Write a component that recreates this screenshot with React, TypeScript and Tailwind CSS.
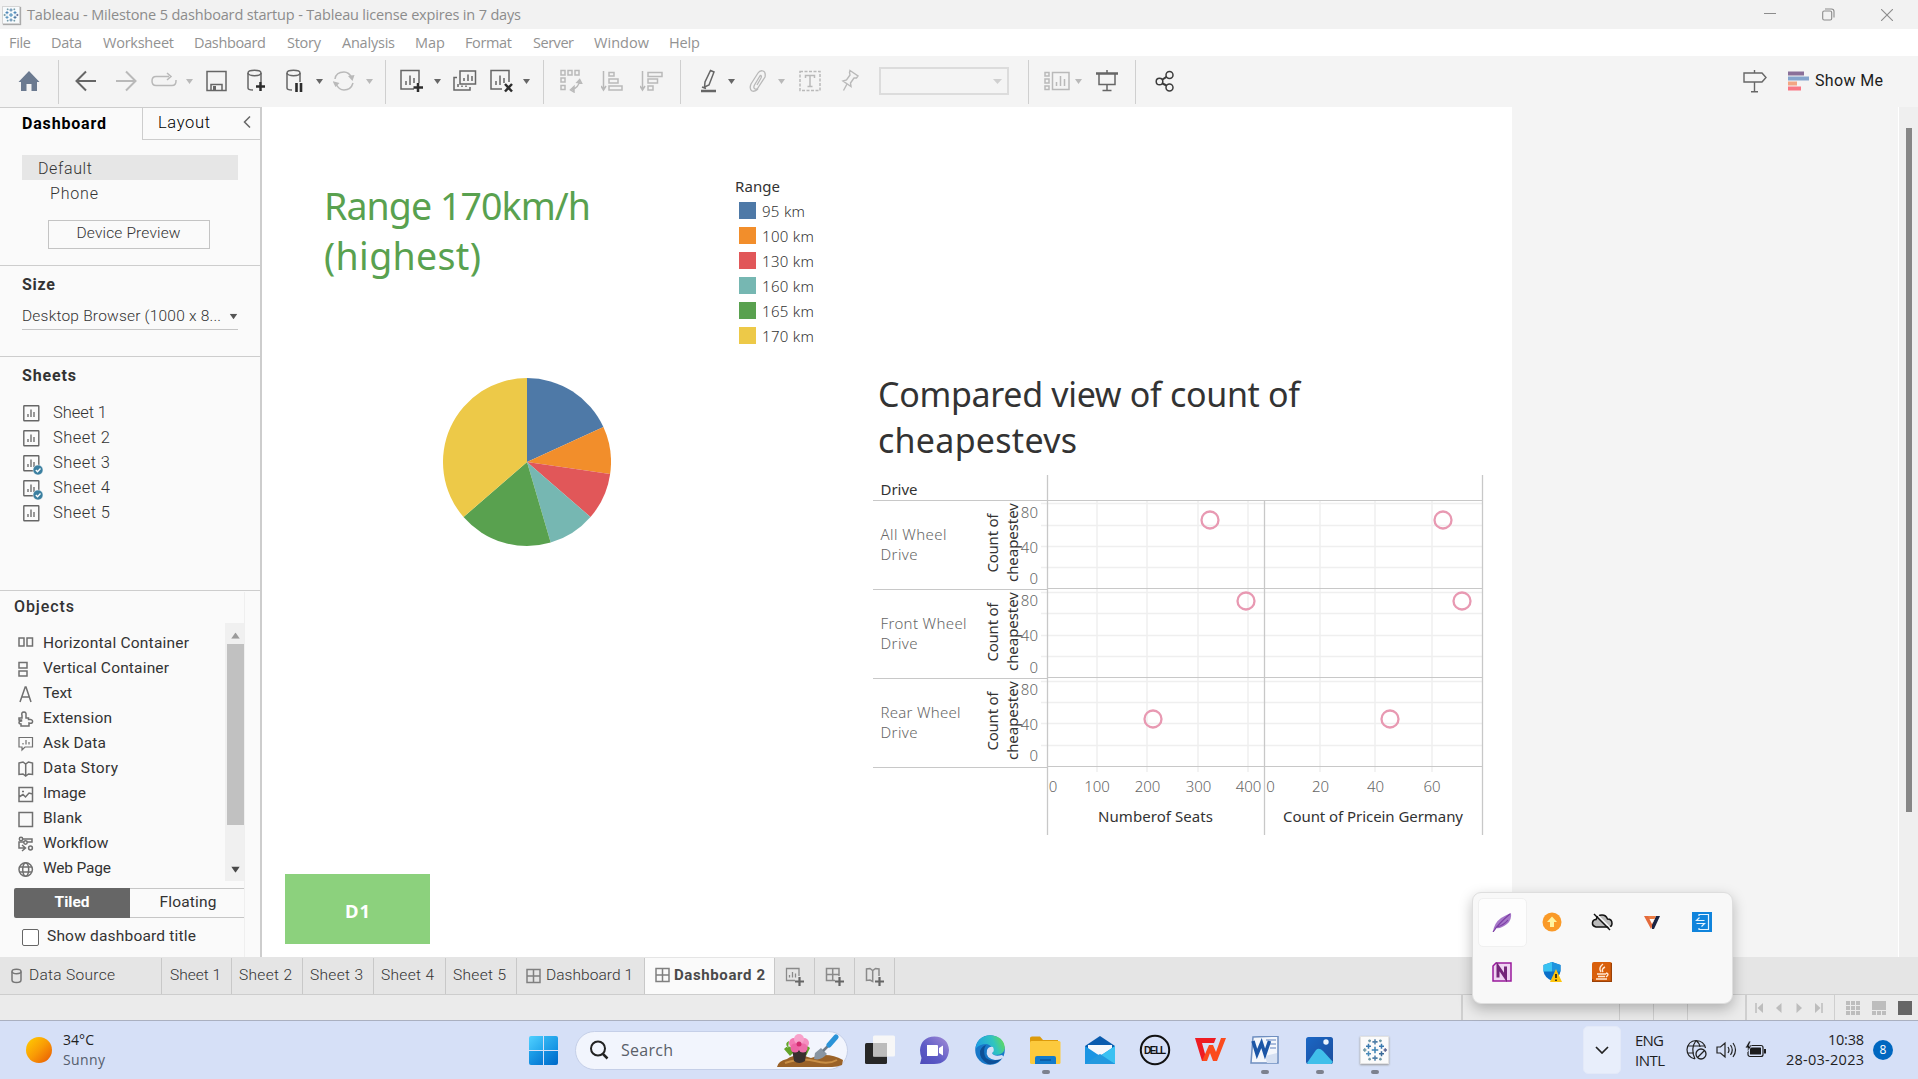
import { useLayoutEffect, useRef, type ReactNode } from "react";

/** Text spaced out or tightened so that it fills a given width. */
function Label({ w, children, className = "" }: { w: number; children: string; className?: string }) {
  const ref = useRef<HTMLSpanElement>(null);
  useLayoutEffect(() => {
    const el = ref.current;
    if (!el) return;
    el.style.letterSpacing = "0px";
    const range = document.createRange();
    range.selectNodeContents(el);
    const natural = range.getBoundingClientRect().width;
    el.style.letterSpacing = `${(w - natural) / Math.max(1, children.length - 1)}px`;
  }, [w, children]);
  return (
    <span ref={ref} style={{ width: w }} className={`inline-block shrink-0 whitespace-nowrap ${className}`}>
      {children}
    </span>
  );
}

function Icon({ w, h, className = "", children }: { w: number; h: number; className?: string; children: ReactNode }) {
  return (
    <svg
      width={w}
      height={h}
      viewBox={`0 0 ${w} ${h}`}
      fill="none"
      stroke="currentColor"
      strokeWidth={1.5}
      className={`block shrink-0 ${className}`}
    >
      {children}
    </svg>
  );
}

const SEGOE = "font-['Open_Sans',sans-serif]";
const BENTON = "font-['Roboto',sans-serif]";

function TableauMark({ size, className = "" }: { size: number; className?: string }) {
  const marks: [number, number, number, string][] = [
    [12, 12, 3, "#3d83b5"], [12, 4.5, 2.4, "#4f7fa8"], [12, 19.5, 2.4, "#4f7fa8"],
    [6, 8.5, 2.3, "#3a7ab0"], [18, 8.5, 2.3, "#3a7ab0"], [6, 15.5, 2.3, "#4a8ab8"], [18, 15.5, 2.3, "#3a6a98"],
    [2.5, 12, 1.6, "#7099a6"], [21.5, 12, 1.6, "#5b6591"], [7, 3.5, 1.3, "#7099a6"], [17, 3.5, 1.3, "#7099a6"],
    [7, 20.5, 1.3, "#7099a6"], [17, 20.5, 1.3, "#7099a6"],
  ];
  return (
    <svg width={size} height={size} viewBox="0 0 24 24" className={`block shrink-0 ${className}`}>
      {marks.map(([x, y, r, c], i) => (
        <path key={i} d={`M${x - r} ${y}H${x + r}M${x} ${y - r}V${y + r}`} stroke={c} strokeWidth={1.4} />
      ))}
    </svg>
  );
}

function TitleBar() {
  return (
    <div className="flex h-[29px] items-center bg-[#f2f2f2] pl-[2px] text-[#8c8c8c]">
      <div className="flex size-[18px] items-center justify-center border border-[#d5d5d5] bg-[#f7fafc] shadow-[1px_1px_1px_#aaa]">
        <TableauMark size={16} />
      </div>
      <Label w={494} className={`ml-[7px] text-[14.5px] ${SEGOE}`}>
        Tableau - Milestone 5 dashboard startup - Tableau license expires in 7 days
      </Label>
      <Icon w={12} h={12} className="ml-[1243px]"><path d="M0 4.5H12" strokeWidth={1} /></Icon>
      <Icon w={13} h={13} className="ml-[46px]">
        <rect x={0.7} y={3} width={9} height={9} rx={1.5} strokeWidth={1.1} />
        <path d="M3 1H9.5Q12 1 12 3.5V9.5" strokeWidth={1.1} />
      </Icon>
      <Icon w={12} h={12} className="ml-[46px]"><path d="M0 0L12 12M12 0L0 12" strokeWidth={1.1} /></Icon>
    </div>
  );
}

const MENUS: [string, number, string][] = [
  ["File", 22, "ml-[9px]"], ["Data", 31, "ml-[20px]"], ["Worksheet", 71, "ml-[21px]"],
  ["Dashboard", 72, "ml-[20px]"], ["Story", 34, "ml-[21px]"], ["Analysis", 53, "ml-[21px]"],
  ["Map", 30, "ml-[20px]"], ["Format", 47, "ml-[20px]"], ["Server", 41, "ml-[21px]"],
  ["Window", 55, "ml-[20px]"], ["Help", 31, "ml-[20px]"],
];

function MenuBar() {
  return (
    <div className={`flex h-[27px] items-center bg-white text-[14.5px] text-[#929292] ${SEGOE}`}>
      {MENUS.map(([name, w, ml]) => (
        <Label key={name} w={w} className={ml}>{name}</Label>
      ))}
    </div>
  );
}

const Sep = ({ className }: { className: string }) => <div className={`mt-px h-[44px] w-px shrink-0 bg-[#cfcfcf] ${className}`} />;

function Caret({ className = "" }: { className?: string }) {
  return (
    <svg width={7} height={5} viewBox="0 0 7 5" fill="currentColor" className={`block shrink-0 ${className}`}>
      <path d="M0 0H7L3.5 5Z" />
    </svg>
  );
}

const DIM = "text-[#b9b9b9]";

function Toolbar() {
  return (
    <div className="flex h-[51px] items-center bg-[#f4f4f4] pb-px text-[#666]">
      <Icon w={22} h={22} className="ml-[18px]">
        <path d="M11 1L21.5 12H19V21H13.5V14H8.5V21H3V12H0.5Z" fill="#6b7a90" stroke="none" />
      </Icon>
      <Sep className="ml-[18px]" />
      <Icon w={22} h={22} className="ml-[16px]"><path d="M21 11H1.5M11 1.5L1.5 11L11 20.500" strokeWidth={2} /></Icon>
      <Icon w={22} h={22} className={`ml-[18px] ${DIM}`}><path d="M1 11H20.500M11 1.500L20.500 11L11 20.500" strokeWidth={2} /></Icon>
      <Icon w={26} h={18} className={`ml-[14px] ${DIM}`}>
        <path d="M18 4.500H5Q1 4.500 1 9T5 13.500H21Q25 13.500 25 9V8M16 1L20 4.500L16 8" />
      </Icon>
      <Caret className={`ml-[9px] ${DIM}`} />
      <Icon w={21} h={22} className="ml-[13px]">
        <path d="M1 1.500H20V20.500H1ZM5 20V14.500H16V20" /><rect x={7} y={16} width={3} height={4} fill="currentColor" stroke="none" />
      </Icon>
      <Icon w={20} h={24} className="ml-[20px]">
        <path d="M1 4V19Q1 21 6 21M14 4V13" /><ellipse cx={7.500} cy={4} rx={6.500} ry={2.700} />
        <path d="M13.500 13V22M9 17.500H18" stroke="#2c2c2c" strokeWidth={2.500} />
      </Icon>
      <Icon w={20} h={24} className="ml-[19px]">
        <path d="M1 4V19Q1 21 6 21M14 4V13" /><ellipse cx={7.500} cy={4} rx={6.500} ry={2.700} />
        <path d="M10.500 14V23M15 14V23" stroke="#2c2c2c" strokeWidth={2.600} />
      </Icon>
      <Caret className="ml-[10px]" />
      <Icon w={22} h={22} className={`ml-[10px] ${DIM}`}>
        <path d="M2 9Q3 2 11 2Q16 2 19 8M20 13Q18 20 11 20Q6 20 3 14" />
        <path d="M15.500 6L22 5L20 11ZM0 11L3 17L7 13Z" fill="currentColor" stroke="none" transform="translate(-0.500 0)" />
      </Icon>
      <Caret className={`ml-[11px] ${DIM}`} />
      <Sep className="ml-[12px]" />
      <Icon w={24} h={24} className="ml-[14px]">
        <path d="M14 20H1V1.500H19V14M6 16V12M10 16V6.500M14 14V9" />
        <path d="M18 14V23M13.500 18.500H23" stroke="#2c2c2c" strokeWidth={2.500} />
      </Icon>
      <Caret className="ml-[10px]" />
      <Icon w={24} h={24} className="ml-[12px]">
        <path d="M7 2H22.500V15H7ZM4 8.500H1V21H17V18M11 12V9M15 12V5.500M19 12V7M5 18V15M9 18V16.500M13 18V16.500" />
      </Icon>
      <Icon w={24} h={24} className="ml-[13px]">
        <path d="M12 20H1V1.500H19V13M6 16V12M10 16V6.500M14 14V9" />
        <path d="M15 15L22 22.500M22 15L15 22.500" stroke="#2c2c2c" strokeWidth={2.500} />
      </Icon>
      <Caret className="ml-[9px]" />
      <Sep className="ml-[13px]" />
      <Icon w={23} h={24} className={`ml-[16px] ${DIM}`}>
        <path d="M1 1.500H5V6H1ZM8 1.500H12V6H8ZM15 1.500H19V6H15ZM1 9H5V13H1ZM1 16.500H5V20.500H1Z" />
        <path d="M19.500 12Q18.500 19 12 20.500M17 13.500L19.700 10.500L21.500 14ZM14 17.500L10.500 20.800L14 23Z" />
      </Icon>
      <Icon w={22} h={22} className={`ml-[18px] ${DIM}`}>
        <path d="M2.500 1V19M0 16L2.500 20L5 16M8 2.500H13V6H8ZM8 9H17V13H8ZM8 16H21V20H8Z" />
      </Icon>
      <Icon w={23} h={22} className={`ml-[17px] ${DIM}`}>
        <path d="M2.500 1V19M0 16L2.500 20L5 16M8 2.500H22V6.500H8ZM8 9H17.500V13H8ZM8 16H13V20H8Z" />
      </Icon>
      <Sep className="ml-[17px]" />
      <Icon w={16} h={24} className="ml-[20px]">
        <path d="M9.500 1.500L13 3L8 16L3.500 18L4 13ZM1 18L5 19.500" /><path d="M0 22H15" strokeWidth={2.500} />
      </Icon>
      <Caret className="ml-[11px]" />
      <Icon w={18} h={24} className={`ml-[14px] ${DIM}`}>
        <path d="M11.500 6L5.500 16Q4 19 6 20Q8 21 9.500 18L16 8Q17 3 14 2Q11 1 9 4L2 15Q0 20 3 22Q6 23 9 20M11.500 6Q13 7 12 9L8 16" strokeWidth={1.300} />
      </Icon>
      <Caret className={`ml-[11px] ${DIM}`} />
      <Icon w={22} h={22} className={`ml-[14px] ${DIM}`}>
        <rect x={1} y={1.500} width={20} height={19} strokeDasharray="3 1.500" /><path d="M6.500 8V5.500H15.500V8M11 5.500V16.500M8.500 16.500H13.500" />
      </Icon>
      <Icon w={18} h={24} className={`ml-[20px] ${DIM}`}>
        <g strokeWidth={1.400}><path d="M9 1.500L17 7L15.500 9L13 9L9.500 14L10 17.500L2 12L5.500 11L9 6L8.500 3.500Z" /><path d="M6 15L2.500 21.500" /></g>
      </Icon>
      <div className="ml-[20px] flex h-[28px] w-[130px] shrink-0 items-center justify-end border-2 border-[#dcdcdc] pr-[5px] text-[#d0d0d0]">
        <svg width={9} height={5} viewBox="0 0 9 5" fill="currentColor"><path d="M0 0H9L4.500 5Z" /></svg>
      </div>
      <Sep className="ml-[19px]" />
      <Icon w={26} h={20} className={`ml-[15px] ${DIM}`}>
        <path d="M1 1.500H5V5H1ZM1 8H5V12H1ZM1 15H5V18.500H1ZM8.500 1.500H25V18.500H8.500ZM12.500 15V11M16.500 15V5M20.500 15V8" />
      </Icon>
      <Caret className={`ml-[5px] ${DIM}`} />
      <Icon w={22} h={22} className="ml-[14px]">
        <path d="M0 3.500H22" strokeWidth={2.500} /><path d="M3 4V14.500H19V4M11 0V3M11 15V20M6.500 20.500H15.500" />
      </Icon>
      <Sep className="ml-[17px]" />
      <Icon w={20} h={22} className="ml-[19px] text-[#3c3c3c]">
        <circle cx={4.500} cy={11.500} r={3.300} /><circle cx={14.500} cy={5} r={3.500} /><circle cx={14.500} cy={17.500} r={3.500} />
        <path d="M7.500 9.500L11.500 6.800M7.500 13.500L11.500 15.500" strokeWidth={2} />
      </Icon>
      <Icon w={24} h={24} className="ml-[568px]">
        <path d="M1 4H19L23 8.500L19 13H1ZM11.500 1V4M11.500 13V22.500M8 22.800H15" strokeWidth={1.400} />
      </Icon>
      <Icon w={21} h={20} className="ml-[21px]">
        <g stroke="none"><rect width={16} height={4} y={0.500} fill="#8a7099" /><rect width={21} height={4} y={5.500} fill="#85a5cd" /><rect width={9} height={4} y={10.500} fill="#f3a583" /><rect width={13} height={4} y={15.500} fill="#f97784" /></g>
      </Icon>
      <Label w={68} className={`ml-[6px] text-[16px] text-[#1c1c1c] ${BENTON}`}>Show Me</Label>
    </div>
  );
}

function SheetIcon({ used }: { used?: boolean }) {
  return (
    <Icon w={21} h={21} className="mt-[2px] text-[#666]">
      <rect x={0.800} y={1.800} width={15} height={15} rx={0.500} strokeWidth={1.400} />
      <path d="M5 13V10M8 13V5.500M11 13V8" strokeWidth={1.300} />
      {used && (
        <>
          <circle cx={15} cy={16} r={5} fill="#3a7fa0" stroke="#fafafa" strokeWidth={0.500} />
          <path d="M12.800 16L14.500 17.700L17.500 14.500" stroke="#fff" strokeWidth={1.300} />
        </>
      )}
    </Icon>
  );
}

const OBJECTS: [string, number, ReactNode][] = [
  ["Horizontal Container", 146, <path d="M1 3H6V11H1ZM9 3H14.500V11H9Z" />],
  ["Vertical Container", 126, <path d="M1 2.500H9V8H1ZM1 11H9V16H1Z" />],
  ["Text", 29, <path d="M2 17L7.200 2H8L13 17M4 12H11" />],
  ["Extension", 69, <path d="M1 8H4V5.500Q3 2 6 2Q8.500 2 8 5.500V8H10.500V9.500H12.500Q15 10 14.500 12T11 13V16H3V14Q1 14 1 12.500T3.500 11V10H1Z" />],
  ["Ask Data", 63, <path d="M1 2.500H14.500V12H7L4 15V12H1ZM5 9.500V8M8 9.500V5M11 9.500V7" strokeWidth={1.200} />],
  ["Data Story", 75, <path d="M1 3L5 2L7.700 4L10.500 2L14.500 3V14.500L10.500 14L7.700 16L5 14L1 14.500ZM7.700 4V16" />],
  ["Image", 43, <path d="M1 2.500H14.500V16.500H1ZM1 12L5 9.500L7.500 12L11 8L14.500 9M4 6.500H6" />],
  ["Blank", 39, <path d="M1 2.500H14.500V16.500H1Z" />],
  ["Workflow", 65, <><path d="M5 4H14V7H1V13H7M4 10L7.500 13L4 16" /><circle cx={3} cy={4} r={1.700} /><circle cx={7.500} cy={7.500} r={1.700} fill="#fafafa" /><circle cx={12.500} cy={13} r={1.900} /></>],
  ["Web Page", 68, <><circle cx={7.700} cy={9.500} r={6.700} /><ellipse cx={7.700} cy={9.500} rx={3} ry={6.700} /><path d="M1.500 7H14M1.500 12H14" /></>],
];

function Sidebar() {
  return (
    <aside className={`flex w-[262px] shrink-0 flex-col border-t border-r-2 border-[#cdcdcd] bg-[#fafafa] text-[#333] ${BENTON}`}>
      <div className="flex h-[32px] shrink-0">
        <div className="flex w-[142px] items-center pl-[22px] pb-px">
          <Label w={84} className="text-[16px] font-bold text-black">Dashboard</Label>
        </div>
        <div className="flex flex-1 items-center border-b border-l border-[#cdcdcd] pl-[15px] text-black">
          <Label w={52} className="text-[16.5px] font-light">Layout</Label>
          <Icon w={8} h={12} className="mb-[3px] ml-[33px] text-[#666]"><path d="M7 0.500L1.500 6L7 11.500" /></Icon>
        </div>
      </div>
      <div className="h-[126px] shrink-0 border-b border-[#cdcdcd] px-[22px] pt-[15px] text-[16px] font-light">
        <div className="flex h-[25px] w-[216px] items-center bg-[#e6e6e6] pl-[16px] pt-[3px]"><Label w={54}>Default</Label></div>
        <div className="flex h-[25px] items-center pl-[28px] pt-[3px]"><Label w={48}>Phone</Label></div>
        <div className="mt-[15px] ml-[26px] flex h-[29px] w-[162px] items-center justify-center border border-[#c4c4c4] bg-[#fafafa] pr-px pb-px text-[15.5px]">
          <Label w={104}>Device Preview</Label>
        </div>
      </div>
      <div className="h-[91px] shrink-0 border-b border-[#cdcdcd] px-[22px] pt-[8px]">
        <div className="flex h-[22px] items-center"><Label w={33} className="text-[16px] font-bold">Size</Label></div>
        <div className="mt-[8px] flex h-[26px] w-[216px] items-center justify-between border-b border-[#c6c6c6] text-[15.5px] font-light">
          <Label w={199}>Desktop Browser (1000 x 8...</Label>
          <Caret className="mr-px scale-110 text-[#555]" />
        </div>
      </div>
      <div className="h-[234px] shrink-0 border-b border-[#cdcdcd] px-[22px] pt-[8px]">
        <div className="flex h-[22px] items-center"><Label w={54} className="text-[16px] font-bold">Sheets</Label></div>
        <div className="mt-[14px] text-[16.5px] font-light">
          {[1, 2, 3, 4, 5].map((n) => (
            <div key={n} className="flex h-[25px] items-center pl-px">
              <SheetIcon used={n === 3 || n === 4} />
              <Label w={n === 1 ? 54 : 57} className="ml-[9px]">{`Sheet ${n}`}</Label>
            </div>
          ))}
        </div>
      </div>
      <div className="mt-px mr-[15px] flex flex-1 flex-col border-r border-[#efefef]">
        <div className="flex h-[31px] items-center pl-[14px] pb-[2px]"><Label w={60} className="text-[16px] font-medium">Objects</Label></div>
        <div className="flex h-[258px] shrink-0 justify-between">
          <div className="pt-[8px] pl-[18px] text-[15.500px]">
            {OBJECTS.map(([name, w, art]) => (
              <div key={name} className="flex h-[25px] items-center">
                <Icon w={17} h={18} className="text-[#707070]">{art}</Icon>
                <Label w={w} className="ml-[8px]">{name}</Label>
              </div>
            ))}
          </div>
          <div className="flex w-[19px] shrink-0 flex-col items-end bg-[#f0f0f0]">
            <div className="flex h-[21px] w-[17px] items-center justify-center pt-[3px] text-[#9b9b9b]"><Caret className="rotate-180 scale-125" /></div>
            <div className="h-[181px] w-[17px] bg-[#c1c1c1]" />
            <div className="mt-[33px] flex h-[23px] w-[17px] items-center justify-center text-[#4a4a4a]"><Caret className="scale-125" /></div>
          </div>
        </div>
        <div className="mt-[7px] ml-[14px] flex h-[30px] text-[15.500px]">
          <div className="flex w-[116px] items-center justify-center rounded-l-[2px] bg-[#666] pb-px font-bold text-white"><Label w={35}>Tiled</Label></div>
          <div className="flex flex-1 items-center justify-center border-y border-[#c6c6c6] pb-px pl-[2px]"><Label w={57}>Floating</Label></div>
        </div>
        <div className="mt-[8px] flex h-[22px] items-center pl-[22px] text-[15.500px]">
          <div className="size-[17px] rounded-[2px] border border-[#666] bg-white" />
          <Label w={149} className="ml-[8px]">Show dashboard title</Label>
        </div>
      </div>
    </aside>
  );
}

const RANGES: [string, string, number][] = [
  ["95 km", "#4e79a7", 2], ["100 km", "#f28e2b", 1], ["130 km", "#e15759", 1],
  ["160 km", "#76b7b2", 1], ["165 km", "#59a14f", 2], ["170 km", "#edc948", 4],
];

function Pie() {
  let start = 0;
  const at = (t: number) => `${84 + 84 * Math.sin((t / 11) * 2 * Math.PI)} ${84 - 84 * Math.cos((t / 11) * 2 * Math.PI)}`;
  return (
    <svg width={168} height={168} viewBox="0 0 168 168" className="block">
      {RANGES.map(([name, color, n]) => {
        const d = `M84 84L${at(start)}A84 84 0 0 1 ${at(start + n)}Z`;
        start += n;
        return <path key={name} d={d} fill={color} />;
      })}
    </svg>
  );
}

const ROWS: { name: string; top: number; base: number; grid: number[]; ticks: number[]; points: [number, number][] }[] = [
  { name: "All Wheel", top: 26, base: 114, grid: [28.5, 50.5, 71.5, 92.5], ticks: [38.5, 73.5, 104.5], points: [[337, 46], [570, 46]] },
  { name: "Front Wheel", top: 115, base: 203, grid: [117.5, 138.5, 160.5, 181.5], ticks: [126.5, 161.5, 193.5], points: [[373, 127], [589, 127]] },
  { name: "Rear Wheel", top: 204, base: 292, grid: [206.5, 227.5, 248.5, 270.5], ticks: [215.5, 250.5, 281.5], points: [[280, 245], [517, 245]] },
];
const XTICKS: [string, number, boolean][] = [
  ["0", 180, false], ["100", 224, true], ["200", 274.5, true], ["300", 325.5, true], ["400", 375.5, true],
  ["0", 397.5, false], ["20", 447.5, true], ["40", 502.5, true], ["60", 559, true],
];

/** Scatter matrix of vehicle counts, split by drive type. */
function Scatter() {
  return (
    <svg width={612} height={362} viewBox="0 0 612 362" className="block font-['Noto_Sans',sans-serif] text-[15px]" fill="#666">
      {XTICKS.filter((t) => t[2]).map(([t, x]) => (
        <path key={x} d={`M${Math.floor(x)} 26V297`} stroke="#efefef" strokeWidth={1.500} data-tick={t} />
      ))}
      {ROWS.map((r) => (
        <g key={r.name}>
          {r.grid.map((y) => <path key={y} d={`M168 ${y}H609`} stroke="#efefef" strokeWidth={1.500} />)}
          <g className="font-light">
            <text x={7.500} y={r.top + 38.5} textLength={r.name === "All Wheel" ? 66 : r.name === "Front Wheel" ? 86 : 80}>{r.name}</text>
            <text x={7.500} y={r.top + 58.5} textLength={37}>Drive</text>
          </g>
          <g fill="#333">
            <text transform={`translate(124.500 ${r.top + 71.500}) rotate(-90)`} textLength={59}>Count of</text>
            <text transform={`translate(145 ${r.top + 81}) rotate(-90)`} textLength={79}>cheapestev</text>
          </g>
          {["80", "40", "0"].map((t, i) => (
            <text key={t} x={165} y={r.ticks[i] + 4.5} textAnchor="end" className="font-light">{t}</text>
          ))}
        </g>
      ))}
      <path d="M0 25.500H609.500V291.500M174.500 113.500H609M0 114.500H174M174.500 202.500H609M0 203.500H174M174.500 291.500H609M0 292.500H175" stroke="#c8c8c8" fill="none" />
      <path d="M174.500 0V360M391.500 26V360M609.500 0V360" stroke="#c8c8c8" strokeWidth={1.300} fill="none" />
      <text x={7.500} y={19.500} textLength={37} fill="#333">Drive</text>
      {ROWS.flatMap((r) => r.points).map(([x, y]) => (
        <circle key={x} cx={x} cy={y - 1} r={8.500} fill="none" stroke="#e899b2" strokeWidth={2.300} />
      ))}
      {XTICKS.map(([t, x], i) => <text key={i} x={x} y={316.500} textAnchor="middle" className="font-light">{t}</text>)}
      <g fill="#333">
        <text x={225} y={346.500} textLength={115}>Numberof Seats</text>
        <text x={410} y={346.500} textLength={180}>Count of Pricein Germany</text>
      </g>
    </svg>
  );
}

function Canvas() {
  return (
    <main className="flex w-[1250px] shrink-0 bg-white font-['Noto_Sans',sans-serif]">
      <section className="flex w-[473px] shrink-0 flex-col">
        <h1 className="ml-[62px] mt-[74px] flex flex-col text-[37.5px] leading-[50px] text-[#59a14f]">
          <Label w={267}>Range 170km/h</Label>
          <Label w={157}>(highest)</Label>
        </h1>
        <div className="mt-[97px] ml-[181px]"><Pie /></div>
        <div className="mt-[328px] ml-[23px] flex h-[70px] w-[145px] items-center justify-center bg-[#8cd17d] pt-[3px] text-[18.5px] font-bold text-white">
          <Label w={25}>D1</Label>
        </div>
      </section>
      <section className="flex flex-col">
        <div className="pt-[68px] text-[15px] text-[#333]">
          <div className="flex h-[23px] items-center"><Label w={45}>Range</Label></div>
          {RANGES.map(([name, color]) => (
            <div key={name} className="flex h-[25px] items-center font-light">
              <svg width={17} height={17} className="ml-[4px]"><rect width={17} height={17} fill={color} /></svg>
              <Label w={name === "95 km" ? 43 : 52} className="ml-[6px] mt-px">{name}</Label>
            </div>
          ))}
        </div>
        <div className="ml-[138px] mt-[23px]">
          <h2 className="ml-[5px] flex flex-col text-[34px] leading-[46px] text-[#333]">
            <Label w={422}>Compared view of count of</Label>
            <Label w={199}>cheapestevs</Label>
          </h2>
          <div className="mt-[12px]"><Scatter /></div>
        </div>
      </section>
    </main>
  );
}

const GridIcon = ({ className = "" }: { className?: string }) => (
  <Icon w={15} h={16} className={`text-[#808080] ${className}`}><path d="M1 1.500H14V14.500H1ZM7.500 1.500V14.500M1 8H14" /></Icon>
);

function TabStrip() {
  return (
    <div className={`flex h-[38px] shrink-0 items-stretch border-b border-[#cdcdcd] bg-[#e5e5e5] pt-px text-[15.5px] font-light text-[#333] ${BENTON}`}>
      <div className="flex w-[162px] items-center border-r border-[#c8c8c8] pl-[11px]">
        <Icon w={11} h={16} className="text-[#777]"><ellipse cx={5.500} cy={3.500} rx={4.500} ry={2.200} /><path d="M1 3.500V12Q1 14.500 5.500 14.500T10 12V3.500" /></Icon>
        <Label w={86} className="ml-[7px]">Data Source</Label>
      </div>
      <div className="flex w-[70px] items-center border-r border-[#c8c8c8] pl-[8px]"><Label w={51}>Sheet 1</Label></div>
      <div className="flex w-[71px] items-center border-r border-[#c8c8c8] pl-[7px]"><Label w={53}>Sheet 2</Label></div>
      <div className="flex w-[71px] items-center border-r border-[#c8c8c8] pl-[7px]"><Label w={53}>Sheet 3</Label></div>
      <div className="flex w-[72px] items-center border-r border-[#c8c8c8] pl-[7px]"><Label w={53}>Sheet 4</Label></div>
      <div className="flex w-[71px] items-center border-r border-[#c8c8c8] pl-[7px]"><Label w={53}>Sheet 5</Label></div>
      <div className="flex w-[127px] items-center pl-[9px]"><GridIcon /><Label w={87} className="ml-[5px]">Dashboard 1</Label></div>
      <div className="flex w-[131px] items-center border-x border-[#c8c8c8] bg-[#fafafa] pl-[10px] pb-[2px] font-bold text-[#4a4a4a]">
        <GridIcon /><Label w={91} className="ml-[4px] text-[15px]">Dashboard 2</Label>
      </div>
      {[
        <path d="M10 13.500H1.500V1.500H14V9M4.500 10.500V8M7.500 10.500V5M10.500 10.500V6.500" strokeWidth={1.300} />,
        <path d="M10 13.500H1.500V1.500H14V9M7.700 1.500V13.500M1.500 7.500H14" />,
        <path d="M7.700 3.500V14.500L5 13L1.500 13.500V2L5 1.500L7.700 3.500L10.500 1.500L14 2V9" />,
      ].map((art, i) => (
        <div key={i} className="flex w-[40px] items-center border-r border-[#c8c8c8] pl-[10px] pt-[2px]">
          <Icon w={21} h={20} className="text-[#8a8a8a]">{art}<path d="M14.500 10V19M10 14.500H19" stroke="#666" strokeWidth={2.200} /></Icon>
        </div>
      ))}
    </div>
  );
}

function StatusBar() {
  return (
    <div className="flex h-[26px] shrink-0 justify-end border-b border-[#aab0c0] bg-[#ebebeb] text-[#bdbdbd]">
      <div className="w-[158px] border-l-2 border-[#cfcfcf]" />
      <div className="w-[34px] border-l border-[#cfcfcf]" />
      <div className="w-[34px] border-l border-[#cfcfcf]" />
      <div className="w-[58px] border-l border-[#cfcfcf]" />
      <div className="flex w-[89px] items-center border-l-2 border-[#cfcfcf] pl-[8px]">
        <Icon w={8} h={10}><path d="M1 0V10" /><path d="M8 0V10L2.500 5Z" fill="currentColor" stroke="none" /></Icon>
        <Icon w={6} h={10} className="ml-[13px]"><path d="M5.500 0V10L0 5Z" fill="currentColor" stroke="none" /></Icon>
        <Icon w={6} h={10} className="ml-[14px]"><path d="M0.500 0V10L6 5Z" fill="currentColor" stroke="none" /></Icon>
        <Icon w={8} h={10} className="ml-[13px]"><path d="M7 0V10" /><path d="M0 0V10L5.500 5Z" fill="currentColor" stroke="none" /></Icon>
      </div>
      <div className="flex w-[84px] items-center border-l border-[#cfcfcf] pl-[11px]">
        <Icon w={14} h={14}><path d="M0 2H14M0 7H14M0 12H14" strokeWidth={4} strokeDasharray="4 1" /></Icon>
        <Icon w={14} h={14} className="ml-[12px]"><rect width={14} height={9} fill="currentColor" stroke="none" /><path d="M0 12H14" strokeWidth={4} strokeDasharray="4 1" /></Icon>
        <div className="ml-[12px] size-[14px] bg-[#666]" />
      </div>
    </div>
  );
}

function TrayPopup() {
  return (
    <div className="absolute top-[892px] left-[1472px] grid h-[112px] w-[261px] grid-cols-[50px_50px_50px_50px_50px] grid-rows-[50px_50px] rounded-[9px] border border-[#dedede] bg-[#f8f8f8] pt-[4px] pl-[4px] shadow-[0_5px_14px_rgba(0,0,0,0.25)] *:place-self-center">
      <div className="flex size-[49px] items-center justify-center rounded-[5px] border border-[#f0f0f0] bg-[#fdfdfd]">
        <Icon w={20} h={20}>
          <path d="M1 20Q2 11 9 6Q14 3 19 1Q20 8 15 12Q9 17 4 16Z" fill="#a678c8" stroke="none" /><path d="M1 20Q7 11 18 2M5 15Q12 13 16 8" stroke="#7d3fa6" strokeWidth={1.200} />
        </Icon>
      </div>
      <Icon w={20} h={20}><circle cx={10} cy={10} r={9.500} fill="#fa9a28" stroke="none" /><path d="M10 4.500L15 10H12V15H8V10H5Z" fill="#fff3a0" stroke="none" /></Icon>
      <Icon w={22} h={20}><path d="M5 15Q1 14 1.500 10.500Q2 7.500 5 7.500Q6.500 3 11 3Q15 3 16.500 7Q21 7 21 11.500Q21 15 17 15Z" fill="#bbb" stroke="#111" /><path d="M4.500 1L20.500 17" stroke="#f8f8f8" strokeWidth={1.500} /><path d="M3 2L19 18" stroke="#111" /></Icon>
      <Icon w={20} h={20}><path d="M2 4H8L11.500 12L9 17Z" fill="#e46b3c" stroke="none" /><path d="M18 4H14L10 13V17H12Z" fill="#1b2443" stroke="none" /><path d="M6 4H14L10 12Z" fill="#ed7d43" stroke="none" /><path d="M7.500 7H12.500L10 12Z" fill="#fff" stroke="none" /></Icon>
      <Icon w={20} h={20}><rect width={20} height={20} fill="#1084dc" stroke="none" /><path d="M7 4V2.500H16.500V17.500H7V16M12.500 8.500H4.500L7.500 5.500M4.500 11.500H12.500L9.500 14.500" stroke="#e6f4ff" strokeWidth={1.200} /></Icon>
      <Icon w={20} h={20}><path d="M4 1H19V19H1V4Z" fill="#efd4f2" stroke="#991a9c" /><path d="M6 15.500V4.500L13.500 15.500V4.500" stroke="#742579" strokeWidth={3} /></Icon>
      <Icon w={20} h={20}>
        <path d="M10 0L18.500 3V9Q18 15 10 19Q2 15 1.500 9V3Z" fill="#0a6fc9" stroke="none" /><path d="M10 0V9.500H1.500V3Z" fill="#38c3f2" stroke="none" /><path d="M10 0V9.500H18.500V3Z" fill="#1e94de" stroke="none" />
        <path d="M14 7L20 20H8Z" fill="#fdc40c" stroke="none" /><path d="M14 12V16M14 17.500V19" stroke="#111" />
      </Icon>
      <Icon w={20} h={20}><rect width={20} height={20} rx={2} fill="#d95f0b" stroke="none" /><path d="M0.500 17V19.500H19.500V1" stroke="#9c4106" /><path d="M11 2Q6 6 9 10M13 5Q9 7 11 10M5 12H14M6 14.500H13M14 11Q18 12 14 15M4 17H15" stroke="#ffe9d4" strokeWidth={1.400} /></Icon>
    </div>
  );
}

const Running = ({ children, className }: { children: ReactNode; className: string }) => (
  <div className={`relative shrink-0 ${className}`}>
    {children}
    <div className="absolute -bottom-[10px] left-1/2 h-[4px] w-[8px] -translate-x-1/2 rounded-full bg-[#7c818e]" />
  </div>
);

function Taskbar() {
  return (
    <div className={`flex h-[58px] shrink-0 items-center bg-[#d6e0f7] text-[14px] text-[#1f1f1f] ${SEGOE}`}>
      <div className="ml-[26px] size-[26px] shrink-0 rounded-full bg-linear-to-br from-[#ffd000] via-[#f99b05] to-[#e65304]" />
      <div className="ml-[11px] flex w-[44px] flex-col text-[14px] leading-[20px]">
        <Label w={31}>34°C</Label>
        <Label w={42} className="text-[#555d6c]">Sunny</Label>
      </div>
      <div className="ml-[422px] grid size-[29px] shrink-0 grid-cols-2 gap-px">
        <div className="rounded-tl-[2px] bg-linear-to-br from-[#4fd0ff] to-[#22a7ec]" />
        <div className="rounded-tr-[2px] bg-linear-to-br from-[#32b5f2] to-[#1090e2]" />
        <div className="rounded-bl-[2px] bg-linear-to-br from-[#20a4eb] to-[#0878d3]" />
        <div className="rounded-br-[2px] bg-linear-to-br from-[#1490e2] to-[#0069c8]" />
      </div>
      <div className="ml-[17px] flex h-[39px] w-[273px] shrink-0 items-center rounded-full border border-[#c5cfe8] bg-[#f2f5fd]">
        <Icon w={20} h={20} className="ml-[13px] text-[#222]"><circle cx={9} cy={8.500} r={7} strokeWidth={2} /><path d="M14 14L18.500 18.500" strokeWidth={2.500} /></Icon>
        <Label w={52} className="ml-[12px] text-[16px] text-[#5a5f69]">Search</Label>
        <Icon w={68} h={34} className="mt-[2px] ml-[104px]">
          <g stroke="none">
            <path d="M0 33Q1 27 10 25Q20 18 34 24Q50 17 66 26L65 31Q60 33 55 33Z" fill="#9a6228" />
            <path d="M8 29Q25 23 38 27T60 26" stroke="#c98f46" strokeWidth={2} fill="none" />
            <path d="M7 15Q13 9 17 18L13 22ZM33 14Q28 9 25 17L29 22ZM12 7Q7 9 11 14Z" fill="#63a329" />
            <path d="M15 15H30L28 27Q22 31 17 27Z" fill="#39302f" />
            <circle cx={17} cy={9} r={5} fill="#f47ab4" /><circle cx={27} cy={9} r={5} fill="#f590c0" /><circle cx={22} cy={5} r={5} fill="#f8a2cb" /><circle cx={18} cy={14} r={4.500} fill="#ee64a5" /><circle cx={26} cy={14} r={4.500} fill="#ee6eaa" /><circle cx={22} cy={10} r={2.500} fill="#d42c70" />
            <path d="M38 19L44 14L50 20Q44 27 37 25Z" fill="#8995a2" />
            <path d="M46 17L54 9" stroke="#6d7b89" strokeWidth={2.500} /><path d="M52 11L59 3" stroke="#2a93d8" strokeWidth={5} strokeLinecap="round" />
          </g>
        </Icon>
      </div>
      <Icon w={30} h={30} className="ml-[17px]"><g stroke="none"><rect y={8} width={22} height={21} rx={1.500} fill="#272727" /><rect x={8} y={0.500} width={22} height={21} rx={1.500} fill="#f7f7f7" /><path d="M8 8H22V21.500H8Z" fill="#bcbcbc" /></g></Icon>
      <Icon w={29} h={29} className="ml-[25px]">
        <defs><linearGradient id="chat" x1="1" x2="0" y2="1"><stop stopColor="#a48dd6" /><stop offset=".6" stopColor="#5c5ac6" /><stop offset="1" stopColor="#4e4bb9" /></linearGradient></defs>
        <path d="M0 28L1.500 22Q0 18 0 14Q1 1 14.500 0.500Q28 1 29 14Q28 28 14 28Z" fill="url(#chat)" stroke="none" /><path d="M7 9H17Q18 9 18 10V19Q18 20 17 20H7ZM19 12L23 9.500V19.500L19 17Z" fill="#fff" stroke="none" />
      </Icon>
      <Icon w={30} h={30} className="ml-[26px]">
        <defs><linearGradient id="edgeTop" y1=".5" x2="1" y2=".2"><stop stopColor="#1e9de4" /><stop offset=".6" stopColor="#30c4c0" /><stop offset="1" stopColor="#68dc4c" /></linearGradient></defs>
        <g stroke="none"><circle cx={15} cy={15} r={14.800} fill="#1878c9" /><path d="M0.500 14Q2 1 15 0.200Q29 1 29.800 13Q29 20 21 20Q16 20 18 16Q18 11 12 9Q4 9 0.500 14Z" fill="url(#edgeTop)" /><path d="M11 10Q7 16 11 23Q18 28 27 23Q22 30 13 29Q4 24 5 16Q7 11 11 10Z" fill="#0d4f97" /><path d="M18 12Q20 16 17 18Q19 22 27 20L29 22Q26 25 20 25Q10 23 12 15Q14 11 18 12Z" fill="#d6e0f7" /></g>
      </Icon>
      <Running className="ml-[25px]">
        <Icon w={31} h={28}><g stroke="none"><path d="M0 2Q0 0.500 2 0.500H10L13 4H28V10H0Z" fill="#dc9a0b" /><rect y={5} width={30.500} height={23} rx={1.500} fill="#fcca3d" /><path d="M5 28V22Q5 20 7 20H24Q26 20 26 22V28Z" fill="#127bcb" /><path d="M10 24H21" stroke="#0a569e" strokeWidth={1.500} /></g></Icon>
      </Running>
      <Icon w={30} h={28} className="ml-[24px]"><g stroke="none"><path d="M0 10L15 0L30 10V12H0Z" fill="#0a5bae" /><path d="M3 9H27V18H3Z" fill="#f6f8fc" /><path d="M0 10L15 20L30 10V28H0Z" fill="#1b95e3" /><path d="M15 20L30 10V28Z" fill="#3ac1f2" /><path d="M0 28L15 18L30 28Z" fill="#2399df" /></g></Icon>
      <svg width={32} height={32} viewBox="0 0 32 32" className="ml-[24px] block shrink-0"><circle cx={16} cy={16} r={14.200} fill="none" stroke="#111" strokeWidth={2} /><text x={16} y={19.500} fontSize={10} fontWeight={700} textAnchor="middle" textLength={22} fill="#111" className="font-['Liberation_Sans',sans-serif]">DELL</text></svg>
      <Icon w={31} h={24} className="ml-[24px]"><g stroke="none"><path d="M0 0H21L19 5H7L12 23H7Z" fill="#ee1c23" /><path d="M7 23L14 7H18L21 14L26 0H31L22 23H18L15 15L12 23Z" fill="#fb4b1d" /></g></Icon>
      <Running className="ml-[24px]">
        <Icon w={29} h={28}><g stroke="none"><path d="M3 1L28 0V27H1Z" fill="#f4f7fc" stroke="#6f8fc0" /><path d="M16 4H26M18 8H26M20 12H26" stroke="#8fa8d2" /><path d="M15 20L27 17V27H17Z" fill="#d5e0f2" /></g><path d="M3 5L7 18L11.500 7L15 18L19.500 5" stroke="#1c56a6" strokeWidth={3.500} /></Icon>
      </Running>
      <Running className="ml-[27px]">
        <Icon w={27} h={27}><defs><linearGradient id="photo" x2="1" y2="1"><stop stopColor="#1b67c5" /><stop offset="1" stopColor="#1b4d9d" /></linearGradient></defs><g stroke="none"><rect width={27} height={27} rx={2.500} fill="url(#photo)" /><path d="M1 26L10 13Q13 10 17 14L27 25L25 27H2Z" fill="#40bfea" /><circle cx={20} cy={5} r={2.700} fill="#ebf4ff" /></g></Icon>
      </Running>
      <Running className="ml-[27px]">
        <div className="flex h-[28px] w-[29px] items-center justify-center border border-[#e2e2e2] bg-[#fbfbfb] shadow-[0_1px_2px_#999]"><TableauMark size={26} /></div>
      </Running>
      <div className="ml-[194px] flex h-[48px] w-[38px] shrink-0 items-center justify-center rounded-[5px] border border-[#e3e9f8] bg-[#e8eefb]">
        <Icon w={14} h={8} className="text-[#222]"><path d="M1 1L7 7L13 1" strokeWidth={1.700} /></Icon>
      </div>
      <div className="ml-[14px] flex w-[31px] shrink-0 flex-col text-[15px] leading-[20px]"><Label w={29}>ENG</Label><Label w={30}>INTL</Label></div>
      <Icon w={22} h={22} className="ml-[20px] text-[#222]">
        <path d="M9 20Q1 18 1 10.500Q2 2 10 1.500Q18 2 19.500 9M10 1.500Q4 10 9 20M10 1.500Q13.500 4 14 8M2 7H18M2 14H8" strokeWidth={1.200} /><circle cx={15} cy={15} r={5} fill="#d6e0f7" strokeWidth={1.300} /><path d="M11.500 18.500L18.500 11.500" strokeWidth={1.300} />
      </Icon>
      <Icon w={21} h={18} className="ml-[8px] text-[#222]"><path d="M1 6H4.500L9 2V16L4.500 12H1ZM12 6Q14 9 12 12M14.500 4Q18 9 14.500 14M17 2Q22 9 17 16" strokeWidth={1.200} /></Icon>
      <Icon w={22} h={18} className="ml-[8px] text-[#1c1c1c]"><rect x={3} y={4.500} width={15} height={11} rx={2} strokeWidth={1.200} /><rect x={5} y={6.500} width={11} height={7} rx={0.500} fill="currentColor" stroke="none" /><path d="M20 8V12.500" strokeWidth={2} /><path d="M4 0L0 7H3L2 11L7 5H4L6 0Z" fill="currentColor" stroke="#d6e0f7" strokeWidth={0.800} /></Icon>
      <div className="ml-[19px] flex w-[78px] shrink-0 flex-col items-end text-[14.500px] leading-[20px]"><Label w={36}>10:38</Label><Label w={78}>28-03-2023</Label></div>
      <div className="ml-[9px] flex size-[20px] shrink-0 items-center justify-center rounded-full bg-[#0067c0] text-[12px] text-white">8</div>
    </div>
  );
}

export default function App() {
  return (
    <div className="relative flex h-[1079px] w-[1918px] flex-col overflow-hidden bg-[#f4f4f4]">
      <TitleBar />
      <MenuBar />
      <Toolbar />
      <div className="flex h-[850px] shrink-0">
        <Sidebar />
        <Canvas />
        <div className="flex-1" />
        <div className="w-[20px] border-l border-white bg-[#efefef] pt-[21px] pl-[7px]">
          <div className="h-[684px] w-[6px] bg-[#868686]" />
        </div>
      </div>
      <TabStrip />
      <StatusBar />
      <Taskbar />
      <TrayPopup />
    </div>
  );
}
